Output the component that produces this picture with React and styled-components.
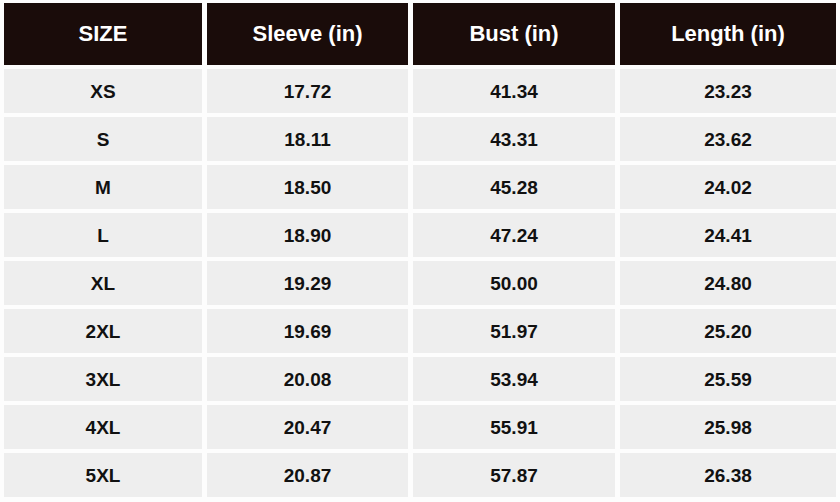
import React from 'react'
import styled, { createGlobalStyle } from 'styled-components'

const GlobalStyle = createGlobalStyle`
  html, body {
    margin: 0;
    padding: 0;
    background: #fdfdfd;
  }
  * { box-sizing: border-box; }
`

const headers = ['SIZE', 'Sleeve (in)', 'Bust (in)', 'Length (in)']

const rows = [
  ['XS', '17.72', '41.34', '23.23'],
  ['S', '18.11', '43.31', '23.62'],
  ['M', '18.50', '45.28', '24.02'],
  ['L', '18.90', '47.24', '24.41'],
  ['XL', '19.29', '50.00', '24.80'],
  ['2XL', '19.69', '51.97', '25.20'],
  ['3XL', '20.08', '53.94', '25.59'],
  ['4XL', '20.47', '55.91', '25.98'],
  ['5XL', '20.87', '57.87', '26.38'],
]

const App = () => {
  return (
    <Page>
      <GlobalStyle />
      <Chart>
        {headers.map((h) => (
          <HeadCell key={h}>{h}</HeadCell>
        ))}
        {rows.map((row) =>
          row.map((v, i) => <Cell key={row[0] + i}>{v}</Cell>)
        )}
      </Chart>
    </Page>
  )
}

export default App

const Page = styled.div`
  width: 840px;
  height: 502px;
  padding: 3px 0 0 4px;
  font-family: "Liberation Sans", Arial, sans-serif;
`

const Chart = styled.div`
  display: grid;
  grid-template-columns: 198px 201px 202px 216px;
  grid-template-rows: 62px repeat(9, 44px);
  column-gap: 5px;
  row-gap: 4px;
`

const HeadCell = styled.div`
  background-color: #1a0c0a;
  color: #ffffff;
  font-size: 22px;
  font-weight: 700;
  display: flex;
  align-items: center;
  justify-content: center;
`

const Cell = styled.div`
  background-color: #eeeeee;
  color: #111111;
  font-size: 19px;
  font-weight: 700;
  padding-top: 2px;
  display: flex;
  align-items: center;
  justify-content: center;
`
